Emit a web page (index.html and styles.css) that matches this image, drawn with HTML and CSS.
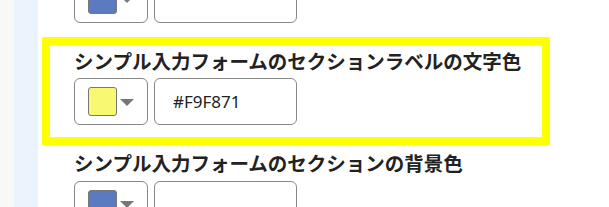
FILE: index.html
```html
<!DOCTYPE html>
<html lang="ja">
<head>
    <meta charset="UTF-8">
    <meta name="viewport" content="width=device-width, initial-scale=1.0">
    <title>フォーム設定</title>
    <link rel="stylesheet" href="styles.css">
</head>
<body>
    <div class="layout">
        <div class="rail"></div>
        <div class="side"></div>
        <main class="settings">
            <div class="field">
                <label class="field-label">シンプル入力フォームのセクション枠線の色</label>
                <div class="field-row">
                    <button class="picker" type="button"><span class="swatch swatch-blue"></span><span class="arrow"></span></button>
                    <input class="hex" type="text" value="">
                </div>
            </div>
            <div class="field highlight">
                <label class="field-label">シンプル入力フォームのセクションラベルの文字色</label>
                <div class="field-row">
                    <button class="picker" type="button"><span class="swatch swatch-yellow"></span><span class="arrow"></span></button>
                    <input class="hex" type="text" value="#F9F871">
                </div>
            </div>
            <div class="field">
                <label class="field-label">シンプル入力フォームのセクションの背景色</label>
                <div class="field-row">
                    <button class="picker" type="button"><span class="swatch swatch-blue"></span><span class="arrow"></span></button>
                    <input class="hex" type="text" value="">
                </div>
            </div>
        </main>
    </div>
</body>
</html>
```

FILE: styles.css
```css
body {
    margin: 0;
    padding: 0;
    background: #fff;
    font-family: "Noto Sans CJK JP", "Noto Sans", sans-serif;
    color: #222;
    overflow: hidden;
}
.layout {
    display: flex;
    height: 207px;
}
.rail {
    width: 14px;
    background-color: #f8f8f6;
}
.side {
    width: 24px;
    background-color: #ebf4fd;
}
.settings {
    padding-left: 12px;
    margin-top: -58px; /* la lista está desplazada hacia arriba */
}
.field {
    width: 492px;
    box-sizing: border-box;
    padding: 6px 24px 12px;
    margin-bottom: 10px;
}
.field.highlight {
    outline: 8px solid #ffff00;
}
.field-label {
    display: block;
    font-size: 19.5px;
    font-weight: bold;
    line-height: 1;
    margin-bottom: 8px;
    white-space: nowrap;
}
.field-row {
    display: flex;
    gap: 6px;
}
.picker {
    width: 74px;
    height: 47px;
    box-sizing: border-box;
    border: 1px solid #888;
    border-radius: 6px;
    background: #fff;
    padding: 0 0 0 13px;
    display: flex;
    align-items: center;
    gap: 3px;
}
.swatch {
    width: 29px;
    height: 29px;
    box-sizing: border-box;
    border: 1px solid #777;
    border-radius: 3px;
}
.swatch-yellow {
    background-color: #f9f871;
}
.swatch-blue {
    background-color: #5a7bc0;
}
.arrow {
    width: 0;
    height: 0;
    border-left: 7px solid transparent;
    border-right: 7px solid transparent;
    border-top: 7px solid #777;
    margin-top: 1px;
}
.hex {
    width: 143px;
    height: 47px;
    box-sizing: border-box;
    border: 1px solid #888;
    border-radius: 6px;
    padding: 0 0 0 18px;
    font-family: "Noto Sans", sans-serif;
    font-size: 17px;
    color: #222;
    background: #fff;
}
```
